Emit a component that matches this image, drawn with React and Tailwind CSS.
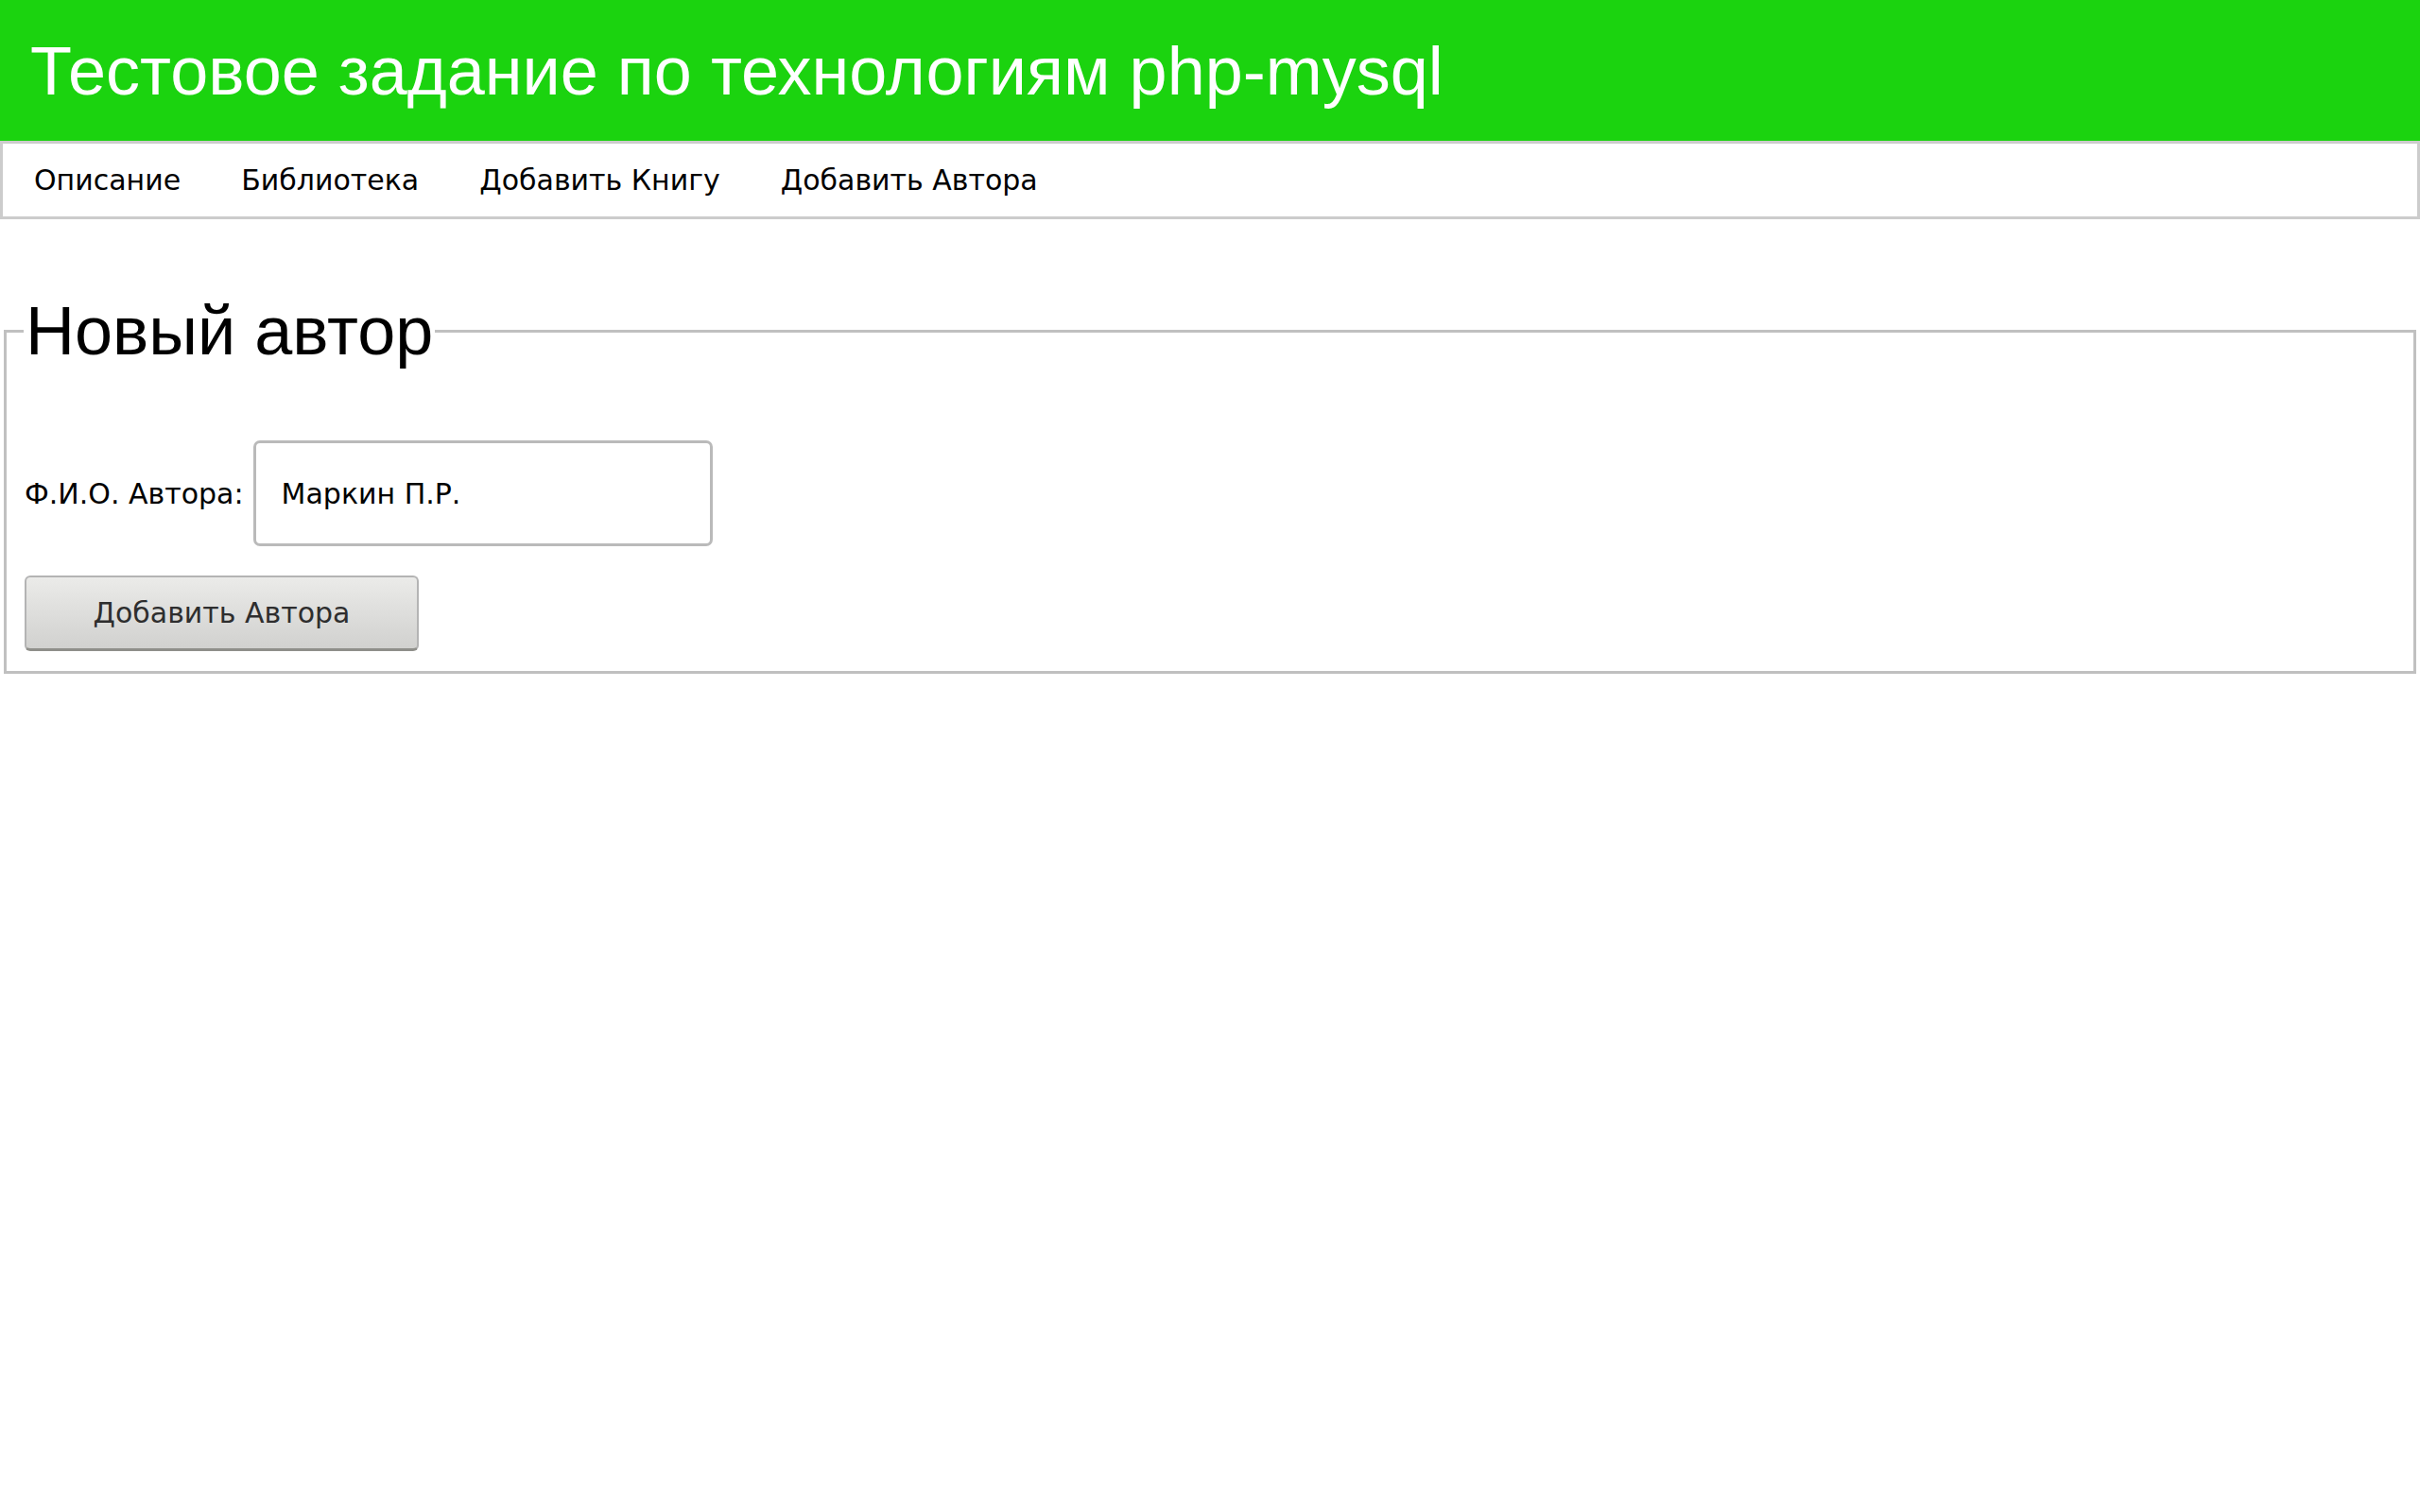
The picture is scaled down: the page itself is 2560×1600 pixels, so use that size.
export default function App() {
  const nav = ["Описание", "Библиотека", "Добавить Книгу", "Добавить Автора"];
  return (
    <div className="min-h-screen bg-white text-black">
      <header className="h-[149px] bg-[#1bd30f] flex items-center pl-[32px]">
        <h1 className="text-[72px] leading-normal text-white font-['Liberation_Sans',Arial,sans-serif] font-normal">
          Тестовое задание по технологиям php-mysql
        </h1>
      </header>
      <nav className="h-[83px] border-[3px] border-[#cccccc] flex items-center pl-[1px] font-['DejaVu_Sans',sans-serif] text-[30px] leading-normal">
        {nav.map((n) => (
          <a key={n} href="#" className="px-[32px] text-black no-underline">
            {n}
          </a>
        ))}
      </nav>
      <fieldset className="mt-[64px] mx-[4px] border-[3px] border-[#c0c0c0] pl-[18px] pr-[18px] pb-[21px]">
        <legend className="px-[2px] text-[72px] leading-normal font-['Liberation_Sans',Arial,sans-serif]">
          Новый автор
        </legend>
        <div className="mt-[62px] flex items-center gap-[10px] font-['DejaVu_Sans',sans-serif] text-[30px] leading-normal">
          <label className="pl-[1px]">Ф.И.О. Автора:</label>
          <input
            type="text"
            defaultValue="Маркин П.Р."
            className="w-[486px] h-[112px] border-[3px] border-[#bababa] rounded-[7px] pl-[27px] pr-[10px] text-[30px] text-black bg-white outline-none font-['DejaVu_Sans',sans-serif]"
          />
        </div>
        <button
          type="button"
          className="mt-[31px] ml-[1px] w-[417px] h-[80px] border-2 border-[#b4b4b4] border-b-[3px] border-b-[#8f8f8a] rounded-[6px] bg-gradient-to-b from-[#ebebe9] to-[#d1d1cf] text-[#2e2e2e] text-[30px] leading-normal font-['DejaVu_Sans',sans-serif] flex items-center justify-center"
        >
          Добавить Автора
        </button>
      </fieldset>
    </div>
  );
}
